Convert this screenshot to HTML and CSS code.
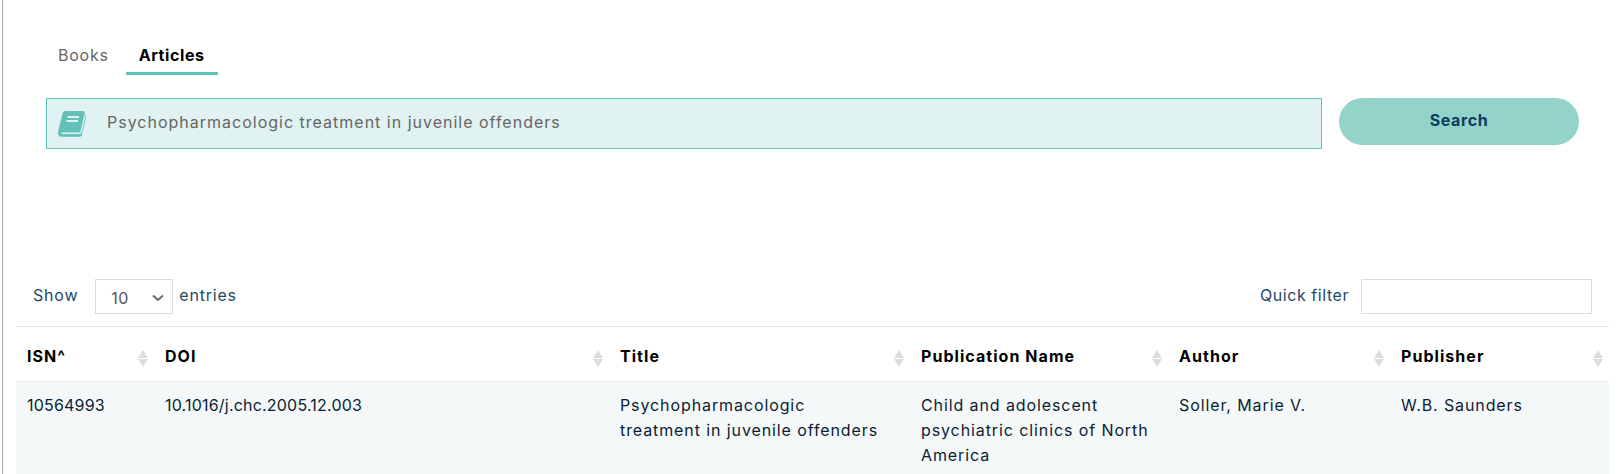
FILE: index.html
```html
<!DOCTYPE html>
<html lang="en">
<head>
  <meta charset="UTF-8">
  <meta name="viewport" content="width=device-width, initial-scale=1.0">
  <title>Article Search</title>
  <link rel="stylesheet" href="styles.css">
</head>
<body>
  <div class="page">

    <!-- Search area -->
    <div class="tabs">
      <a class="tab">Books</a>
      <a class="tab active">Articles</a>
    </div>
    <div class="search-row">
      <div class="search-box">
        <svg class="book-icon" viewBox="0 0 30 28" width="30" height="28">
          <path class="book-fill" d="M8.5 1H25.5C27 1 27.800 2 27.600 3.500L29.300 6.500 25 24.800C24.700 26 24 26.800 22.800 26.800H4.500C2 26.800.5 24.500 1 22L5.500 3.500C6 2 7 1 8.500 1z"/>
          <path class="book-gap" d="M4.500 23.300H22.500C23.500 23.300 24 22.800 24.200 22L28 5"/>
          <path class="book-line" d="M10.500 7h11.500M9.500 11h11.500"/>
        </svg>
        <span class="search-text">Psychopharmacologic treatment in juvenile offenders</span>
      </div>
      <button class="search-btn">Search</button>
    </div>

    <!-- Results table -->
    <div class="table-tools">
      <div class="length">
        <span class="tool-label">Show</span>
        <div class="select-box">
          <span>10</span>
          <svg viewBox="0 0 12 8" width="12" height="8"><path class="chevron" d="M1 1.500l5 4.500 5-4.500"/></svg>
        </div>
        <span class="tool-label">entries</span>
      </div>
      <div class="filter">
        <span class="tool-label">Quick filter</span>
        <div class="filter-box"></div>
      </div>
    </div>

    <table class="results">
      <colgroup>
        <col class="col-isn">
        <col class="col-doi">
        <col class="col-title">
        <col class="col-pub">
        <col class="col-author">
        <col class="col-publisher">
      </colgroup>
      <thead>
        <tr>
          <th>ISN^<span class="sort"></span></th>
          <th>DOI<span class="sort"></span></th>
          <th>Title<span class="sort"></span></th>
          <th>Publication Name<span class="sort"></span></th>
          <th>Author<span class="sort"></span></th>
          <th>Publisher<span class="sort"></span></th>
        </tr>
      </thead>
      <tbody>
        <tr>
          <td class="num">10564993</td>
          <td class="num">10.1016/j.chc.2005.12.003</td>
          <td>Psychopharmacologic<br>treatment in juvenile offenders</td>
          <td>Child and adolescent psychiatric clinics of North America</td>
          <td>Soller, Marie V.</td>
          <td>W.B. Saunders</td>
        </tr>
      </tbody>
    </table>
  </div>
</body>
</html>
```

FILE: styles.css
```css
html, body { margin: 0; padding: 0; height: 474px; overflow: hidden; background: #fff; }
body { font-family: "Inter", "Open Sans", sans-serif; font-size: 16px; letter-spacing: 0.9px; color: #0b1d33; }
.page { margin-left: 2px; border-left: 1px solid #aaa; height: 474px; padding: 39px 0 0 13px; box-sizing: border-box; width: 1607px; }

.tabs { display: flex; gap: 4px; margin-left: 29px; }
.tab { padding: 6px 13px 7px; line-height: 20px; color: #666; letter-spacing: 0.75px; border-bottom: 3px solid transparent; }
.tab.active { font-weight: 700; color: #000; letter-spacing: 0.6px; border-bottom-color: #5ec4b9; }

.search-row { display: flex; gap: 17px; margin: 23px 0 0 30px; align-items: flex-start; }
.search-box { width: 1276px; height: 51px; box-sizing: border-box; display: flex; align-items: center; background: #e0f2f1; border: 1px solid #5ec4b9; padding-left: 10px; }
.book-icon { flex: none; margin-right: 20px; }
.book-fill { fill: #62c1b6; }
.book-gap { stroke: #e0f2f1; stroke-width: 1.4; fill: none; }
.book-line { stroke: #e0f2f1; stroke-width: 2; fill: none; }
.search-text { color: #666; letter-spacing: 1px; padding-bottom: 3px; }
.search-btn { width: 240px; height: 47px; padding: 0 0 3px; border: none; border-radius: 24px; background: #93d3ca; color: #0d3c61; font-family: inherit; font-size: 16px; letter-spacing: 0.6px; font-weight: 700; }

.table-tools { display: flex; justify-content: space-between; align-items: center; margin-top: 130px; height: 35px; padding: 0 17px; color: #1f4a68; }
.length, .filter { display: flex; align-items: center; }
.tool-label { padding-bottom: 4px; letter-spacing: 0.8px; }
.filter .tool-label { letter-spacing: 0.55px; }
.select-box { width: 78px; height: 35px; box-sizing: border-box; margin: 0 6px 0 17px; padding: 2px 8px 0 15px; border: 1px solid #ddd; display: flex; justify-content: space-between; align-items: center; color: #555; letter-spacing: 0.4px; }
.chevron { fill: none; stroke: #666; stroke-width: 1.8; }
.filter-box { width: 231px; height: 35px; box-sizing: border-box; margin-left: 12px; border: 1px solid #ddd; }

.results { width: 1593px; margin-top: 12px; border-collapse: collapse; table-layout: fixed; border-top: 1px solid #e4e4e4; }
.col-isn { width: 138px; }
.col-doi { width: 455px; }
.col-title { width: 301px; }
.col-pub { width: 258px; }
.col-author { width: 222px; }
.col-publisher { width: 219px; }
.results th { position: relative; height: 55px; padding: 4px 11px 0; box-sizing: border-box; text-align: left; font-weight: 700; color: #000; letter-spacing: 1.05px; border-bottom: 1px solid #e8eeee; }
.results td { padding: 11px 11px; line-height: 25px; vertical-align: top; background: #f4f8f8; color: #0b1d33; }
.results td.num { letter-spacing: 0.2px; }

/* sort arrows sit over the header cell */
.sort { position: absolute; right: 6px; top: 23px; width: 0; height: 0; border-left: 5px solid transparent; border-right: 5px solid transparent; border-bottom: 8px solid #ddd; }
.sort::after { content: ""; position: absolute; left: -5px; top: 9px; border-left: 5px solid transparent; border-right: 5px solid transparent; border-top: 8px solid #ddd; }
```
